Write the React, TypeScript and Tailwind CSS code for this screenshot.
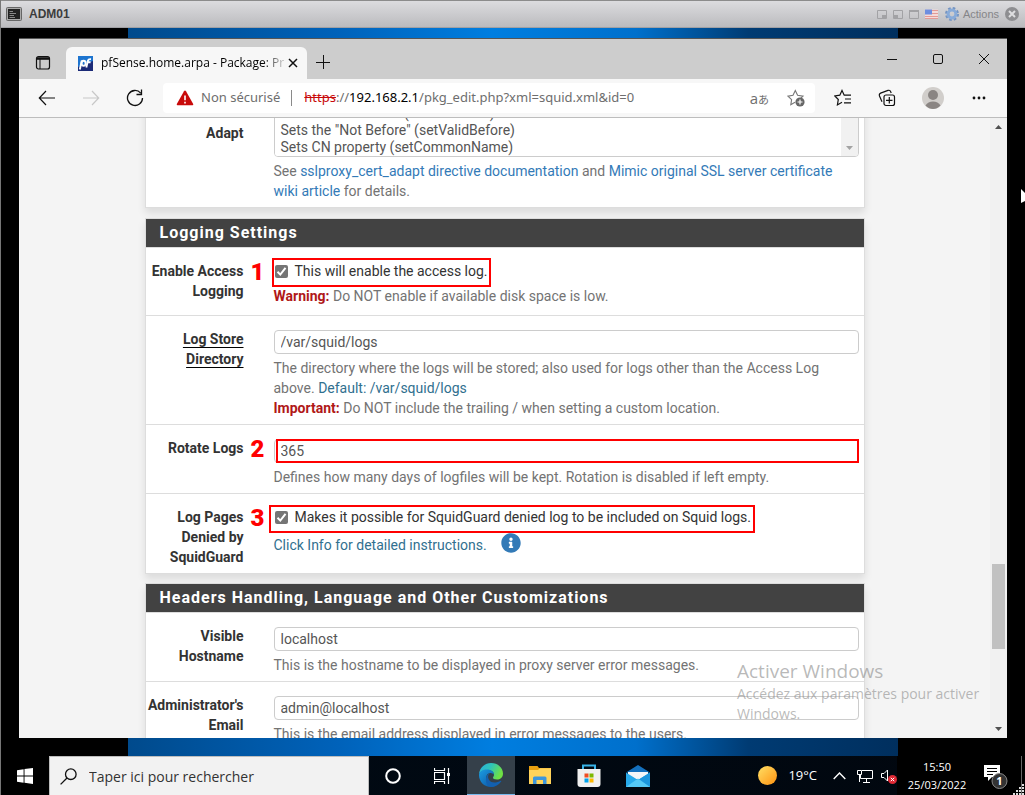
import React from "react";
import { FaInfoCircle } from "react-icons/fa";

function TitleBar() {
  return (
    <header className="flex h-7 shrink-0 items-center border-t border-b border-t-[#8c8c8c] border-b-[#a0a0a4] bg-linear-to-b from-[#dcdcdf] to-[#bbbbbe] pl-[5px] pr-[6px] font-['Liberation_Sans',Arial,sans-serif]">
      <svg width="16" height="14" viewBox="0 0 16 14" aria-hidden="true">
        <rect x="0.5" y="0.5" width="15" height="13" rx="1" fill="#aaa" stroke="#666" />
        <rect x="2" y="2" width="12" height="10" fill="#222" />
        <path d="M3.500 4.500H7M3.500 6.500H10M3.500 8.500H8M3.500 10.500H9" stroke="#888" strokeWidth="1" />
      </svg>
      <h1 className="ml-[7px] grow text-[12px] font-bold text-[#3c3c3c]">ADM01</h1>
      <div className="flex items-center text-[#858588]">
        <svg width="61" height="12" viewBox="0 0 61 12" fill="none" stroke="#a2a2a5" aria-hidden="true">
          <path d="M.5 2.500h9v8h-9zM16.500 2.500h9v8h-9zM32.500 2.500h9v8h-9z" />
          <path d="M32 3h10" strokeWidth="2" />
          <path d="M5 7h4v3H5zM17 7h4v3h-4z" fill="#a2a2a5" stroke="none" />
          <path d="M48 1.500h13v9.500H48z" fill="#f3dada" stroke="none" />
          <path d="M48 2.500h13M48 5.500h13M48 8.500h13M48 10.500h13" stroke="#e39a96" />
          <path d="M48 1.500h7v5h-7z" fill="#6d8ee0" stroke="none" />
        </svg>
        <svg className="ml-[7px]" width="14" height="14" viewBox="0 0 14 14" aria-hidden="true">
          <g fill="none">
            <circle cx="7" cy="7" r="5.900" strokeWidth="2.200" strokeDasharray="2.600 2.034" stroke="#7494c2" />
            <circle cx="7" cy="7" r="3.900" strokeWidth="3" stroke="#88abd9" />
          </g>
        </svg>
        <button className="ml-1 text-[11px]">Actions</button>
        <button aria-label="Close console" className="ml-[6px]">
          <svg className="block" width="14" height="14" viewBox="0 0 14 14">
            <circle cx="7" cy="7" r="7" fill="#8e8e91" />
            <path d="M4 4l6 6M10 4l-6 6" stroke="#dedee0" strokeWidth="2" />
          </svg>
        </button>
      </div>
    </header>
  );
}

function TabStrip() {
  return (
    <div className="flex h-10 shrink-0 bg-[#cdcdcd]">
      <button aria-label="Tab actions" className="flex w-[47px] items-center justify-center pt-[8px]">
        <svg width="16" height="16" viewBox="0 0 16 16" fill="none" stroke="#111">
          <rect x="1.500" y="1.500" width="13" height="12.500" rx="2" strokeWidth="1.200" />
          <path d="M2 3.500h12" strokeWidth="2.600" />
          <path d="M5 4v10" />
        </svg>
      </button>
      <div className="mt-2 flex w-[241px] items-center rounded-t-[6px] bg-[#f7f7f7] pl-3 pr-3">
        <svg className="shrink-0" width="15" height="15" viewBox="0 0 15 15" aria-hidden="true">
          <rect width="15" height="15" fill="#1b2a77" />
          <path d="M0 0h15v5L0 11z" fill="#1d74cf" />
          <g fill="none" stroke="#fff" strokeWidth="1.900">
            <path d="M3.800 4.500L1.800 13.500" />
            <ellipse cx="5.600" cy="7.300" rx="2" ry="2.500" />
            <path d="M8.300 11.500L9.900 4.700Q10.400 2.900 13 3.200M8.600 6.200h4" />
          </g>
        </svg>
        <span className="ml-2 grow bg-linear-to-r from-black from-88% to-[#00000030] bg-clip-text font-['Open_Sans','Noto_Sans',sans-serif] text-[12px] whitespace-nowrap text-transparent">
          pfSense.home.arpa - Package: Pr
        </span>
        <button aria-label="Close tab" className="ml-1 shrink-0">
          <svg className="block" width="10" height="10" viewBox="0 0 10 10" stroke="#111" strokeWidth="1.500">
            <path d="M1 1l8 8M9 1l-8 8" />
          </svg>
        </button>
      </div>
      <button aria-label="New tab" className="flex w-8 items-center justify-center pt-[6px]">
        <svg width="14" height="14" viewBox="0 0 14 14" stroke="#111">
          <path d="M7.500 0v14M0 7.500h14" />
        </svg>
      </button>
      <div className="grow" />
      <div className="flex [&>button]:flex [&>button]:w-[46px] [&>button]:items-center [&>button]:justify-center">
        <button aria-label="Minimize">
          <svg width="10" height="10" viewBox="0 0 10 10" stroke="#111"><path d="M0 5.500h10" /></svg>
        </button>
        <button aria-label="Maximize">
          <svg width="10" height="10" viewBox="0 0 10 10" fill="none" stroke="#111"><rect x=".5" y=".5" width="9" height="9" rx="1.500" /></svg>
        </button>
        <button aria-label="Close window">
          <svg width="10" height="10" viewBox="0 0 10 10" stroke="#111"><path d="M0 0l10 10M10 0L0 10" /></svg>
        </button>
      </div>
    </div>
  );
}

const navButton = "flex w-11 shrink-0 items-center justify-center";

function Toolbar() {
  return (
    <div className="flex h-[39px] shrink-0 items-stretch border-b border-[#bdbdbd] bg-[#f7f7f7] px-[6px]">
      <button aria-label="Back" className={navButton}>
        <svg width="18" height="16" viewBox="0 0 18 16" fill="none" stroke="#111" strokeWidth="1.200"><path d="M17 8H1.500M8 1L1.300 8L8 15" /></svg>
      </button>
      <button aria-label="Forward" className={navButton}>
        <svg width="18" height="16" viewBox="0 0 18 16" fill="none" stroke="#c8c8c8" strokeWidth="1.200"><path d="M1 8h15.500M10 1l6.700 7L10 15" /></svg>
      </button>
      <button aria-label="Refresh" className={navButton}>
        <svg width="18" height="18" viewBox="0 0 18 18" fill="none" stroke="#111" strokeWidth="1.300">
          <path d="M16.500 9A7.500 7.500 0 1 1 14.700 4.100M15.500 0.500V5.500H10.500" />
        </svg>
      </button>
      <div className="my-1 ml-[6px] mr-[6px] flex min-w-0 grow items-center rounded-[4px] bg-white pl-[13px] pr-[10px] font-['Noto_Sans','Open_Sans',sans-serif] text-[13px] text-[#6e6e6e]">
        <svg className="shrink-0" width="18" height="16" viewBox="0 0 18 16" aria-hidden="true">
          <path d="M9 .5Q9.600 .5 10 1.200L17.200 14Q17.500 15.300 16.500 15.300H1.500Q.5 15.300 .8 14L8 1.200Q8.400 .5 9 .5z" fill="#c80a0a" />
          <path d="M9 5.500v4.800M9 11.700v1.800" stroke="#fff" strokeWidth="1.600" />
        </svg>
        <span className="ml-[7px] whitespace-nowrap">Non sécurisé</span>
        <span className="mr-3 ml-[11px] h-4 w-px shrink-0 bg-[#8a8a8a]" />
        <span className="grow whitespace-nowrap">
          <s className="text-[#c80a0a]">https</s>://<span className="text-black">192.168.2.1</span>/pkg_edit.php?xml=squid.xml&amp;id=0
        </span>
        <button aria-label="Translate" className="font-['Open_Sans','Noto_Sans_CJK_JP',sans-serif] whitespace-nowrap">
          <span className="text-[15px]">a</span><span className="text-[11px]">あ</span>
        </button>
        <button aria-label="Add to favorites" className="ml-[18px]">
          <svg className="block" width="18" height="18" viewBox="0 0 18 18" fill="none" stroke="#777" strokeWidth="1.100">
            <path d="M8 13.300l-4.200 2.500.8-5.100L1 7.100l5-.8L8.300 1.500l2.300 4.800 5.400.8-2.100 2" />
            <circle cx="13" cy="13" r="4.600" fill="#666" stroke="none" />
            <path d="M13 10.500v5M10.500 13h5" stroke="#fff" strokeWidth="1.200" />
          </svg>
        </button>
      </div>
      <button aria-label="Favorites" className={navButton}>
        <svg width="18" height="18" viewBox="0 0 18 18" fill="none" stroke="#111" strokeWidth="1.200">
          <path d="M8 13.300l-4.600 2.600.9-5.400L.8 6.900l5-.7L8 1.500l2.200 4.700H17M11 10h6M10 13.800h7" />
        </svg>
      </button>
      <button aria-label="Collections" className={navButton}>
        <svg width="18" height="18" viewBox="0 0 18 18" fill="none" stroke="#111" strokeWidth="1.200">
          <rect x="6" y="6" width="10.500" height="10.500" rx="2" />
          <path d="M11.300 8v6.500M8 11.300h6.500M4 12.700L1.500 7Q.8 5 2.600 4.100L10 1.400Q12 .8 12.600 2.500L13.200 4" />
        </svg>
      </button>
      <button aria-label="Profile" className="flex w-12 shrink-0 items-center justify-center">
        <svg width="22" height="22" viewBox="0 0 22 22">
          <circle cx="11" cy="11" r="11" fill="#d1cecb" />
          <circle cx="11" cy="8" r="5" fill="#8a8583" />
          <path d="M3.500 18.500Q6 14.500 11 14.500T18.500 18.500Q15 22 11 22T3.500 18.500z" fill="#8a8583" />
        </svg>
      </button>
      <button aria-label="Settings and more" className={navButton}>
        <svg width="14" height="4" viewBox="0 0 14 4" fill="#111"><circle cx="2" cy="2" r="1.400" /><circle cx="7" cy="2" r="1.400" /><circle cx="12" cy="2" r="1.400" /></svg>
      </button>
    </div>
  );
}

function Step({ n }: { n: number }) {
  return (
    <span className="absolute -top-px left-full ml-[7px] font-['Liberation_Sans_Narrow','Roboto',sans-serif] text-[24px] leading-6 font-black text-[#f00]">
      {n}
    </span>
  );
}

function Row({ label, id, underline, step, children }: { label: string; id: string; underline?: boolean; step?: number; children: React.ReactNode }) {
  return (
    <div className="grid grid-cols-[98px_minmax(0,1fr)] gap-x-[30px] border-b border-[#ddd] pt-[13px] pr-[5px] pb-[6px]">
      <div className="relative text-right font-bold text-[#333]">
        <label htmlFor={id}>
          <span className={underline ? "underline decoration-black underline-offset-[3px]" : ""}>{label}</span>
        </label>
        {step && <Step n={step} />}
      </div>
      <div>{children}</div>
    </div>
  );
}

function Panel({ title, children }: { title: string; children: React.ReactNode }) {
  return (
    <section className="mt-[9px] border border-b-0 border-[#ddd] bg-white shadow-[0_5px_8px_rgba(0,0,0,0.1)]">
      <h2 className="flex h-[29px] items-center border-b border-[#ddd] bg-[#424242] pl-[14px] text-[16px] font-bold tracking-[1px] text-white">{title}</h2>
      {children}
    </section>
  );
}

function TextField({ id, value, marked }: { id: string; value: string; marked?: boolean }) {
  return (
    <div className="relative mt-px mb-1">
      <input id={id} type="text" defaultValue={value} className="block h-6 w-full rounded-[4px] border border-[#ccc] bg-white px-[6px] text-[#555] outline-none" />
      {marked && <span className="pointer-events-none absolute inset-y-0 right-0 left-[2px] border-2 border-[#f00]" />}
    </div>
  );
}

function Tick({ id, text, box }: { id: string; text: string; box: string }) {
  return (
    <div className="flex">
      <label className="relative flex h-5 items-center gap-[7px] text-[#333]">
        <input id={id} type="checkbox" defaultChecked className="peer ml-px size-[13px] appearance-none rounded-[2px] bg-[#757575]" />
        <svg className="pointer-events-none absolute left-px size-[13px]" viewBox="0 0 13 13" fill="none" stroke="#fff" strokeWidth="2">
          <path d="M2.500 6.800l2.800 2.800 5.200-6.700" />
        </svg>
        {text}
        <span className={`pointer-events-none absolute border-2 border-[#f00] ${box}`} />
      </label>
    </div>
  );
}

function Content() {
  return (
    <main className="relative flex min-h-0 grow overflow-hidden bg-[#f4f4f4] font-['Roboto',sans-serif] text-[14px] leading-5 text-[#737373]">
      <div className="min-w-0 grow">
        <div className="mx-auto -mt-[18px] max-w-[720px]">
          <section className="mb-[10px] border-x border-[#ddd] bg-white shadow-[0_5px_8px_rgba(0,0,0,0.1)]">
            <div className="grid grid-cols-[98px_minmax(0,1fr)] gap-x-[30px] border-b border-[#ddd] pr-[5px] pb-[6px]">
              <label htmlFor="adapt" className="pt-[23px] text-right font-bold text-[#333]">Adapt</label>
              <div>
                <div className="mt-px mb-1 flex h-14 overflow-hidden rounded-[4px] border border-[#ccc]">
                  <select id="adapt" multiple size={3} className="grow overflow-hidden bg-white pt-[3px] pl-[4px] text-[#555] outline-none [&>option]:h-[17px] [&>option]:min-h-0 [&>option]:p-0 [&>option]:pl-[2px] [&>option]:leading-[17px]">
                    <option>Sets the "Not After" (setValidAfter)</option>
                    <option>Sets the "Not Before" (setValidBefore)</option>
                    <option>Sets CN property (setCommonName)</option>
                  </select>
                  <div className="flex w-[17px] items-end justify-center bg-[#f1f1f1] pb-[6px]">
                    <svg width="7" height="4" viewBox="0 0 7 4" fill="#a3a3a3" aria-hidden="true"><path d="M0 0h7L3.500 4z" /></svg>
                  </div>
                </div>
                <p>
                  See <a href="#directive" className="text-[#337ab7]">sslproxy_cert_adapt directive documentation</a> and{" "}
                  <a href="#mimic" className="text-[#337ab7]">Mimic original SSL server certificate wiki article</a> for details.
                </p>
              </div>
            </div>
          </section>

          <Panel title="Logging Settings">
            <Row label="Enable Access Logging" id="access" step={1}>
              <Tick id="access" text="This will enable the access log." box="-top-[3px] -bottom-[6px] -left-[2px] -right-[3px]" />
              <p className="mt-[5px] mb-[3px]"><b className="text-[#b01818]">Warning:</b> Do NOT enable if available disk space is low.</p>
            </Row>
            <Row label="Log Store Directory" id="store" underline>
              <TextField id="store" value="/var/squid/logs" />
              <p>
                The directory where the logs will be stored; also used for logs other than the Access Log above. <span className="text-[#31708f]">Default: /var/squid/logs</span>
                <br />
                <b className="text-[#b01818]">Important:</b> Do NOT include the trailing / when setting a custom location.
              </p>
            </Row>
            <Row label="Rotate Logs" id="rotate" step={2}>
              <TextField id="rotate" value="365" marked />
              <p>Defines how many days of logfiles will be kept. Rotation is disabled if left empty.</p>
            </Row>
            <Row label="Log Pages Denied by SquidGuard" id="denied" step={3}>
              <Tick id="denied" text="Makes it possible for SquidGuard denied log to be included on Squid logs." box="-top-[2px] -bottom-[6px] -left-[5px] -right-[4px]" />
              <div className="mt-[6px] flex items-start gap-[14px] text-[#31708f]">
                <p className="pt-[2px]">Click Info for detailed instructions.</p>
                <button aria-label="Info"><FaInfoCircle className="block size-5 text-[#337ab7]" /></button>
              </div>
            </Row>
          </Panel>

          <Panel title="Headers Handling, Language and Other Customizations">
            <Row label="Visible Hostname" id="host">
              <TextField id="host" value="localhost" />
              <p>This is the hostname to be displayed in proxy server error messages.</p>
            </Row>
            <Row label="Administrator's Email" id="email">
              <TextField id="email" value="admin@localhost" />
              <p>This is the email address displayed in error messages to the users.</p>
            </Row>
          </Panel>
        </div>
      </div>
      <div className="flex w-[17px] shrink-0 flex-col items-center bg-[#f1f1f1] py-[7px]" aria-hidden="true">
        <svg width="7" height="4" viewBox="0 0 7 4" fill="#505050"><path d="M0 4h7L3.500 0z" /></svg>
        <div className="grow-[435]" />
        <div className="h-[85px] w-[13px] bg-[#c1c1c1]" />
        <div className="grow-[78]" />
        <svg width="7" height="4" viewBox="0 0 7 4" fill="#505050"><path d="M0 0h7L3.500 4z" /></svg>
      </div>
      <div className="pointer-events-none absolute right-[20px] bottom-[14px] w-[250px] font-['Open_Sans','Noto_Sans',sans-serif] text-[14px] text-[#8a8a8a]/60">
        <p className="text-[19px] leading-[26px]">Activer Windows</p>
        <p>Accédez aux paramètres pour activer Windows.</p>
      </div>
    </main>
  );
}

function Taskbar() {
  return (
    <footer className="flex h-[39px] shrink-0 bg-linear-to-r from-[#000a14] to-[#01070f] font-['Open_Sans','Noto_Sans',sans-serif] text-white [&>button]:flex [&>button]:items-center [&>button]:justify-center">
      <button aria-label="Start" className="w-12 bg-black">
        <svg width="16" height="16" viewBox="0 0 16 16" fill="#fff"><path d="M0 2.200L6.600 1.200V7.500H0zM7.500 1.100L16 0v7.500H7.500zM0 8.400h6.600v6.300L0 13.800zM7.500 8.400H16V16l-8.500-1.200z" /></svg>
      </button>
      <label className="flex w-[320px] items-center gap-3 border border-b-0 border-[#bdbdbd] bg-[#f2f2f2] pl-[10px]">
        <svg className="shrink-0" width="17" height="17" viewBox="0 0 17 17" fill="none" stroke="#111" strokeWidth="1.300"><circle cx="10.800" cy="6.200" r="5.300" /><path d="M7 10L.6 16.400" /></svg>
        <input aria-label="Taper ici pour rechercher" placeholder="Taper ici pour rechercher" className="min-w-0 grow bg-transparent text-[14px] outline-none placeholder:text-[#333]" />
      </label>
      <button aria-label="Cortana" className="w-12">
        <svg width="16" height="16" viewBox="0 0 16 16" fill="none" stroke="#fff" strokeWidth="2"><circle cx="8" cy="8" r="6.800" /></svg>
      </button>
      <button aria-label="Task view" className="w-[49px]">
        <svg width="16" height="16" viewBox="0 0 16 16" fill="none" stroke="#fff"><path d="M.5 0v2.500h10V0M.5 4.500h10v7H.5zM.5 16v-2.500h10V16M14.500 0v16" strokeWidth="1.200" /><path d="M13 5h3v3h-3z" fill="#fff" stroke="none" /></svg>
      </button>
      <button aria-label="Microsoft Edge" className="ml-px w-12 border-b border-[#76b9ed] bg-[#35404a]">
        <svg width="24" height="24" viewBox="0 0 24 24">
          <defs>
            <linearGradient id="edgeTop" x1="0" y1="0" x2="1" y2="0.400"><stop offset="0" stopColor="#28aee0" /><stop offset=".5" stopColor="#2fc3b8" /><stop offset="1" stopColor="#6fe044" /></linearGradient>
            <linearGradient id="edgeLow" x1="0" y1="0" x2="1" y2="1"><stop offset="0" stopColor="#1b9de2" /><stop offset="1" stopColor="#0b4fa0" /></linearGradient>
          </defs>
          <path d="M0 11C1 4 6 0 12 0c7 0 12 5 12 10.500 0 4-3 6-6 6-2.800 0-4.200-1-4-2 .3-1 1-1.300 1-2.800C15 9 12 7 8.500 7 4.500 7 1.500 8.500 0 11z" fill="url(#edgeTop)" />
          <path d="M0 12C0 8.500 4 6.500 8 6.500c4.500 0 7 2.500 7 5-1-1-2.500-1.500-4-1.500C8 10.500 7 13 7.500 15.500 8.300 20 13 23 17.500 21.300 16 23 14 24 12 24 5 24 0 18.500 0 12z" fill="url(#edgeLow)" />
          <path d="M11 10c-2 1.500-2.500 4-1.300 6.300C11.500 20 16.500 20.500 21.800 17.700c.5-.2.700.1.500.5C20 22 16 24 12 24c-3-.5-5.500-4-5-8 .3-3 2-5.500 4-6z" fill="#1260b0" />
        </svg>
      </button>
      <button aria-label="File Explorer" className="w-[49px]">
        <svg width="22" height="19" viewBox="0 0 22 19"><path d="M0 0h8.500l1.500 2h12v4H0z" fill="#e8a010" /><path d="M0 4h9l2-1.700h11V18H0z" fill="#ffd35a" /><path d="M4 18v-6q0-1.500 1.500-1.500h10.500q1.500 0 1.500 1.500v6h-3.500v-4H7.500v4z" fill="#3c96dc" /></svg>
      </button>
      <button aria-label="Microsoft Store" className="w-[49px]">
        <svg width="24" height="24" viewBox="0 0 24 24"><path d="M6 6V1.500h12V6" fill="none" stroke="#39b3e8" strokeWidth="2" /><path d="M.5 5h23v15q0 3-3 3h-17q-3 0-3-3z" fill="#f0f0f0" /><path d="M6 5V3M18 5V3" stroke="#39b3e8" strokeWidth="2" /><path d="M7.500 9.500h4v4h-4z" fill="#f04e23" /><path d="M12.500 9.500h4v4h-4z" fill="#7db900" /><path d="M7.500 14.500h4v4h-4z" fill="#00a2ed" /><path d="M12.500 14.500h4v4h-4z" fill="#feb800" /></svg>
      </button>
      <button aria-label="Mail" className="w-[49px]">
        <svg width="24" height="22" viewBox="0 0 24 22"><path d="M0 7.500L12 0l12 7.500z" fill="#1470bd" /><path d="M2 7h20v7H2z" fill="#f4f6f8" /><path d="M0 7.500L12 15l12-7.500V22H0z" fill="#27a9ea" /><path d="M12 15l12-7.500V22z" fill="#1c96dd" /><path d="M0 22L12 13.500 24 22z" fill="#55c8f5" /></svg>
      </button>
      <div className="grow" />
      <button aria-label="Weather" className="gap-[11px] text-[13px]">
        <svg width="19" height="19" viewBox="0 0 19 19"><defs><linearGradient id="sun" x1="0" y1="0" x2="1" y2="1"><stop offset="0" stopColor="#ffe066" /><stop offset="1" stopColor="#ff9210" /></linearGradient></defs><circle cx="9.500" cy="9.500" r="9.500" fill="url(#sun)" /></svg>
        19°C
      </button>
      <button aria-label="Hidden icons" className="ml-1 w-9">
        <svg width="13" height="8" viewBox="0 0 13 8" fill="none" stroke="#fff" strokeWidth="1.400"><path d="M.7 7L6.500 1l5.800 6" /></svg>
      </button>
      <button aria-label="Network" className="w-4">
        <svg width="16" height="14" viewBox="0 0 16 14" fill="none" stroke="#fff"><path d="M5 1.500h10.500v8H3.500V6M.5 1.500h4v4h-4zM2.500 5v8M9.500 10v3M6 13.500h7" /></svg>
      </button>
      <button aria-label="Volume muted" className="w-6 pl-2">
        <svg width="16" height="16" viewBox="0 0 16 16" fill="none" stroke="#fff"><path d="M.5 5.500h2.500L6.500 2v11L3 9.500H.5z" /><circle cx="11.500" cy="11.500" r="4.500" fill="#df2935" stroke="none" /><path d="M9.800 9.800l3.400 3.400M13.200 9.800l-3.400 3.400" /></svg>
      </button>
      <button aria-label="Clock" className="w-20 flex-col bg-black text-[11px] leading-[18px]">
        <span>15:50</span>
        <span>25/03/2022</span>
      </button>
      <button aria-label="Notifications" className="w-9 bg-black">
        <svg className="mt-1 ml-1 shrink-0" width="26" height="26" viewBox="0 0 26 26">
          <path d="M0 0h16v12h-8l-4 4v-4H0z" fill="#fff" />
          <path d="M3 3.500h10M3 6.500h10M3 9.500h6" stroke="#000" />
          <circle cx="15.500" cy="16" r="7.500" fill="#333" stroke="#888" />
          <text x="15.500" y="20" fontSize="11" fontWeight="bold" textAnchor="middle" fill="#fff">1</text>
        </svg>
      </button>
      <div className="flex items-end bg-black" aria-hidden="true">
        <svg width="12" height="39" viewBox="0 0 12 39"><path d="M8.500 0v39" stroke="#666" /><path d="M9 28h2v2H9zM6 31h2v2H6zM9 31h2v2H9zM3 34h2v2H3zM6 34h2v2H6zM9 34h2v2H9zM0 37h2v2H0zM3 37h2v2H3zM6 37h2v2H6zM9 37h2v2H9z" fill="#ddd" /></svg>
      </div>
    </footer>
  );
}

export default function App() {
  return (
    <div className="relative flex h-screen flex-col overflow-hidden border-l border-[#777] bg-black">
      <TitleBar />
      <div className="flex min-h-0 grow flex-col bg-[linear-gradient(90deg,#000_127px,#004a8c_127px,#0062ba_33%,#007ee0_48%,#0070cc_62%,#003b73_73%,#002f5e_calc(100%-127px),#000_calc(100%-127px))] pt-[10px] pr-[18px] pb-[18px] pl-[18px]">
        <div className="flex min-h-0 grow flex-col border-t border-[#555]">
          <TabStrip />
          <Toolbar />
          <Content />
        </div>
      </div>
      <Taskbar />
      <svg className="pointer-events-none absolute top-[189px] right-0" width="4" height="15" viewBox="0 0 4 15" aria-hidden="true"><path d="M0 0l4 4v8l-4 2z" fill="#fff" /></svg>
    </div>
  );
}
